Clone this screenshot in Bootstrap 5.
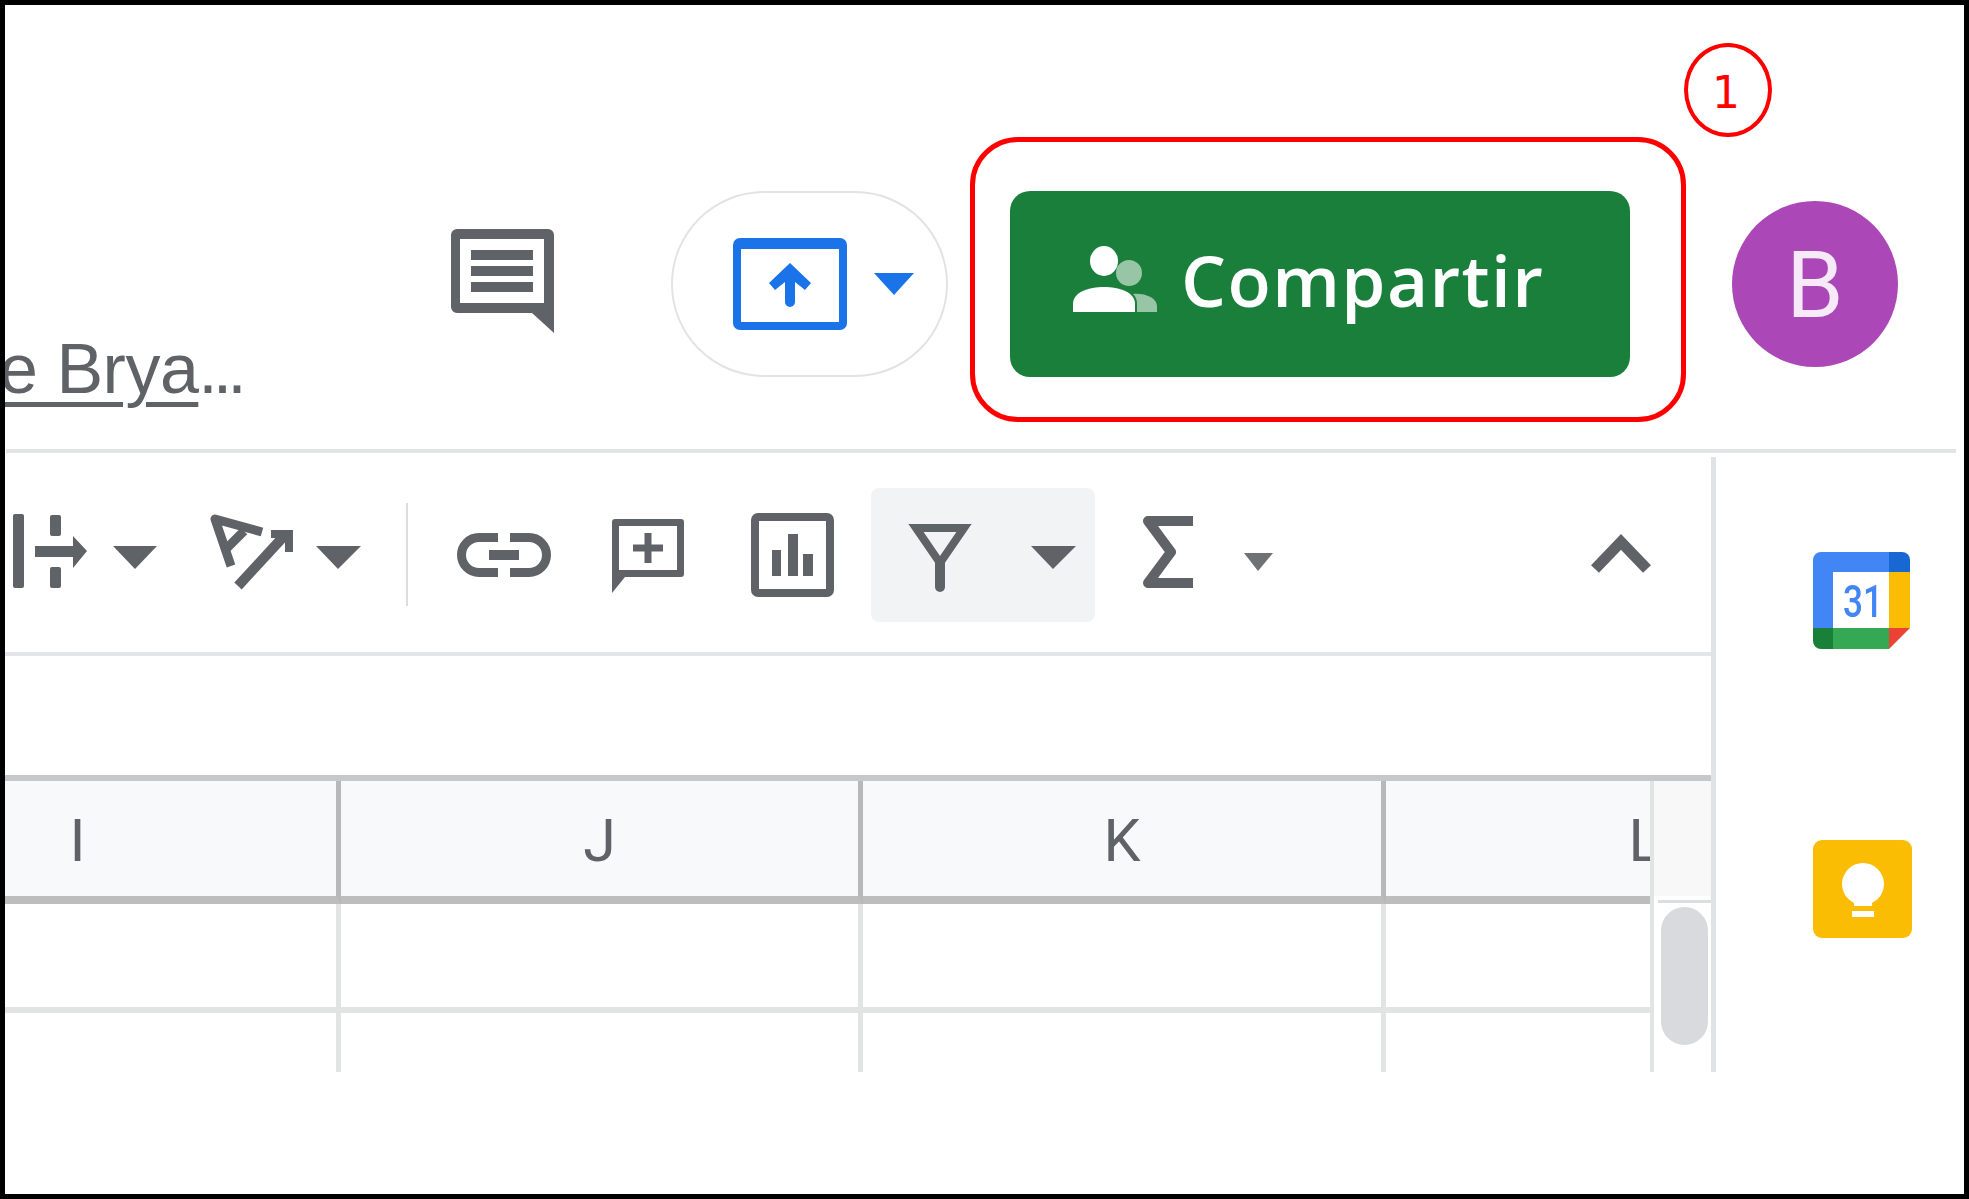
<!DOCTYPE html>
<html lang="es">
<head>
  <meta charset="UTF-8">
  <title>Compartir</title>
  <link href="https://cdn.jsdelivr.net/npm/bootstrap@5.3.3/dist/css/bootstrap.min.css" rel="stylesheet">
  <style>
    html, body { height: 100%; margin: 0; background: #000; }
    svg { display: block; flex-shrink: 0; }

    .shot { width: 1969px; height: 1199px; border: 5px solid #000; background: #fff; overflow: hidden; }
    .soft { filter: blur(.7px); }

    /* top bar */
    .top-bar { height: 444px; padding-top: 132px; }
    .doc-name { width: 446px; height: 90px; margin-top: 197px; overflow: hidden; white-space: nowrap;
      font: 400 70px/70px "Liberation Sans", Arial, sans-serif; color: #5f6368; }
    .doc-name u { margin-left: -6px; letter-spacing: -.5px; text-decoration-thickness: 5px; text-underline-offset: 9px; }
    .doc-dots { letter-spacing: -5px; }
    .top-comment { margin-top: 92px; }
    .btn.present-pill { width: 277px; height: 186px; margin: 54px 0 0 117px; padding: 0 0 0 60px; gap: 27px;
      border: 2px solid #e3e3e3; border-radius: 93px; background: #fff; }
    .red-box { position: relative; width: 716px; height: 285px; margin-left: 22px; padding: 49px 0 0 35px;
      border: 5px solid #f00; border-radius: 48px; }
    .red-num { position: absolute; left: 709px; top: -99px; width: 88px; height: 94px; padding: 4px 4px 0 0;
      border: 4px solid #f00; border-radius: 50%; color: #f00;
      font: 400 44px/84px "DejaVu Sans", sans-serif; text-align: center; }
    .btn.share-btn { width: 620px; height: 186px; padding: 0 0 10px 63px; gap: 24px; border: 0; border-radius: 20px;
      background: #1a7f3b; color: #fff; font: 600 71px/1 "Open Sans", sans-serif; letter-spacing: 1.4px; }
    .user-dot { width: 166px; height: 166px; margin: 64px 0 0 46px; padding-top: 4px; background: #ab47b7; color: #f6e9f8;
      font: 400 92px/1 Roboto, sans-serif; }
    .top-rule { height: 4px; margin: 0 8px 4px 1px; background: #e2e4e7; }

    /* main + rail */
    .work-area { height: 615px; }
    .main-col { width: 1711px; border-right: 5px solid #e0e2e6; }
    .tool-row { height: 195px; }
    .tool-sep { width: 2px; height: 103px; margin: 0 32px 0 36px; background: #dadce0; }
    .tool-active { width: 224px; height: 134px; background: #f1f3f4; border-radius: 8px; }
    .tool-chevron { margin-left: 290px; }
    .tool-rule { height: 4px; background: #e3e5e8; }
    .formula-row { height: 119px; }

    .sheet-top { height: 6px; background: #c6c8ca; }
    .sheet-wrap { height: 291px; }
    .sheet-view { width: 1645px; overflow: hidden; }
    .sheet-grid { display: grid; grid-template-columns: 522px 522px 523px 522px; grid-template-rows: 123px 109px 59px; margin-left: -186px; }
    .col-head { height: 123px; padding-top: 4px; background: #f8f9fa; border-right: 5px solid #b7b8b9; border-bottom: 8px solid #bdbdbd;
      font: 400 59px/1 Roboto, sans-serif; color: #5f6368; }
    .grid-cell { border-right: 5px solid #e2e3e3; }
    .grid-row-line { border-bottom: 6px solid #e2e3e3; }
    .side-gutter { width: 61px; border-left: 4px solid #e2e3e3; }
    .gutter-head { height: 115px; background: #f8f8f8; }
    .gutter-line { height: 3px; margin: 4px 0 0 4px; background: #dcdddf; }
    .gutter-thumb { width: 47px; height: 138px; margin: 4px 0 0 7px; background: #d8dadd; border-radius: 24px; }

    .side-rail { padding: 95px 0 0 97px; gap: 191px; }
  </style>
</head>
<body>
<div class="shot">

  <!-- top bar -->
  <div class="top-bar d-flex align-items-start">
    <div class="doc-name soft"><u>e Brya</u><span class="doc-dots">...</span></div>

    <svg class="top-comment soft" width="103" height="104" viewBox="0 0 103 104">
      <path fill="#5f6368" fill-rule="evenodd" d="M6 0H97a6 6 0 0 1 6 6V104L81 84H6a6 6 0 0 1-6-6V6a6 6 0 0 1 6-6ZM9 10V74H93V10Z"/>
      <path fill="#5f6368" d="M20 21H82V31H20ZM20 37H82V47H20ZM20 53H82V63H20Z"/>
    </svg>

    <button class="btn present-pill d-flex align-items-center soft" type="button">
      <svg width="114" height="96" viewBox="0 0 114 96">
        <path fill="#1a73e8" fill-rule="evenodd" d="M7 2H107a7 7 0 0 1 7 7V87a7 7 0 0 1-7 7H7a7 7 0 0 1-7-7V9a7 7 0 0 1 7-7ZM8 13V86H106V13Z"/>
        <path fill="#1a73e8" d="M57 27L78 47L72 54L62 46V66a5 5 0 0 1-10 0V46L42 54L36 47Z"/>
      </svg>
      <svg width="40" height="22" viewBox="0 0 40 22"><path fill="#1a73e8" d="M0 0H40L20 22Z"/></svg>
    </button>

    <div class="red-box">
      <button class="btn share-btn d-flex align-items-center soft" type="button">
        <svg width="84" height="66" viewBox="0 0 84 66">
          <circle cx="56" cy="27" r="13" fill="#fff" opacity=".55"/>
          <path fill="#fff" opacity=".55" d="M64 66V58C64 54 63 51 60 48C72 47 84 52 84 60V66Z"/>
          <ellipse cx="31" cy="15" rx="14" ry="15" fill="#fff"/>
          <path fill="#fff" d="M0 66V58C0 46 16 41 31 41C46 41 62 46 62 58V66Z"/>
        </svg>
        <span>Compartir</span>
      </button>
      <div class="red-num">1</div>
    </div>

    <div class="user-dot rounded-circle d-flex align-items-center justify-content-center soft">B</div>
  </div>
  <div class="top-rule soft"></div>

  <div class="work-area d-flex">
    <div class="main-col soft">

      <!-- toolbar -->
      <div class="tool-row d-flex align-items-center">
        <svg width="100" height="100" viewBox="0 0 100 100" fill="#5f6368">
          <rect x="8" y="9" width="11" height="74" rx="2"/>
          <rect x="45" y="10" width="11" height="21" rx="2"/>
          <rect x="45" y="62" width="11" height="21" rx="2"/>
          <path d="M30 41H68V31L82 46L68 63V52H30Z"/>
        </svg>
        <svg width="60" height="100" viewBox="0 0 60 100"><path fill="#5f6368" d="M8 41H52L30 64Z"/></svg>
        <svg width="135" height="100" viewBox="0 0 135 100" fill="none" stroke="#5f6368" stroke-width="9">
          <path d="M97 27L50 14L66 61" stroke-linejoin="round"/>
          <path d="M79 26L59 46"/>
          <path d="M73 81L120 30" stroke-width="10"/>
          <path d="M106 29H124V47" stroke-width="8"/>
        </svg>
        <svg width="70" height="100" viewBox="0 0 70 100"><path fill="#5f6368" d="M16 41H61L38 64Z"/></svg>
        <div class="tool-sep"></div>
        <svg width="165" height="100" viewBox="0 0 165 100" fill="none" stroke="#5f6368" stroke-width="9">
          <path d="M58 32.5H39a17.500 17.500 0 0 0 0 35H58"/>
          <path d="M70 32.5H89a17.500 17.500 0 0 1 0 35H70"/>
          <rect x="49" y="45" width="30" height="10" fill="#5f6368" stroke="none"/>
        </svg>
        <svg width="135" height="100" viewBox="0 0 135 100" fill="#5f6368">
          <path fill-rule="evenodd" d="M10 14H76a3 3 0 0 1 3 3V69a3 3 0 0 1-3 3H20L7 88V17a3 3 0 0 1 3-3ZM14 21V65H72V21Z"/>
          <path d="M39.500 28H46.500V39.500H58V46.500H46.500V58H39.500V46.500H28V39.500H39.500Z"/>
        </svg>
        <svg width="131" height="100" viewBox="0 0 131 100" fill="#5f6368">
          <rect x="15" y="12" width="75" height="76" rx="3" fill="none" stroke="#5f6368" stroke-width="8"/>
          <rect x="32" y="45" width="9" height="26"/>
          <rect x="48" y="29" width="10" height="42"/>
          <rect x="63" y="49" width="10" height="22"/>
        </svg>
        <div class="tool-active d-flex align-items-center">
          <svg width="130" height="100" viewBox="0 0 130 100" fill="none" stroke="#5f6368" stroke-width="8">
            <path d="M45 23H93L69 58Z"/>
            <path d="M69 58V82" stroke-width="10" stroke-linecap="round"/>
          </svg>
          <svg width="94" height="100" viewBox="0 0 94 100"><path fill="#5f6368" d="M30 41H75L52 64Z"/></svg>
        </div>
        <svg width="120" height="100" viewBox="0 0 120 100" fill="none" stroke="#5f6368" stroke-width="10">
          <path d="M98 16H53L76 47L53 78H98" stroke-linejoin="round"/>
        </svg>
        <svg width="75" height="100" viewBox="0 0 75 100"><path fill="#6f7175" d="M29 48H58L43 66Z"/></svg>
        <svg class="tool-chevron" width="80" height="100" viewBox="0 0 80 100" fill="none" stroke="#5f6368" stroke-width="11">
          <path d="M15 64L41 37L67 64"/>
        </svg>
      </div>
      <div class="tool-rule"></div>
      <div class="formula-row"></div>

      <!-- sheet -->
      <div class="sheet-top"></div>
      <div class="sheet-wrap d-flex">
        <div class="sheet-view">
          <div class="sheet-grid">
            <div class="col-head d-flex align-items-center justify-content-center">I</div>
            <div class="col-head d-flex align-items-center justify-content-center">J</div>
            <div class="col-head d-flex align-items-center justify-content-center">K</div>
            <div class="col-head d-flex align-items-center justify-content-center">L</div>
            <div class="grid-cell grid-row-line"></div>
            <div class="grid-cell grid-row-line"></div>
            <div class="grid-cell grid-row-line"></div>
            <div class="grid-cell grid-row-line"></div>
            <div class="grid-cell"></div>
            <div class="grid-cell"></div>
            <div class="grid-cell"></div>
            <div class="grid-cell"></div>
          </div>
        </div>
        <div class="side-gutter">
          <div class="gutter-head"></div>
          <div class="gutter-line"></div>
          <div class="gutter-thumb"></div>
        </div>
      </div>
    </div>

    <!-- side apps -->
    <div class="side-rail d-flex flex-column align-items-start soft">
      <svg width="97" height="97" viewBox="0 0 97 97">
        <path fill="#4285f4" d="M8 0H76V20H20V76H0V8a8 8 0 0 1 8-8Z"/>
        <path fill="#1967d2" d="M76 0H89a8 8 0 0 1 8 8V20H76Z"/>
        <rect x="76" y="20" width="21" height="56" fill="#fbbc04"/>
        <rect x="20" y="76" width="56" height="21" fill="#34a853"/>
        <path fill="#188038" d="M0 76H20V97H8a8 8 0 0 1-8-8Z"/>
        <path fill="#ea4335" d="M76 76H97L76 97Z"/>
        <text x="30" y="65" font-family="Roboto, sans-serif" font-size="44" font-weight="500" fill="#4285f4" textLength="40" lengthAdjust="spacingAndGlyphs">31</text>
      </svg>
      <svg width="99" height="98" viewBox="0 0 99 98">
        <rect width="99" height="98" rx="9" fill="#fbbc04"/>
        <circle cx="50" cy="44" r="21" fill="#fff"/>
        <rect x="41" y="56" width="18" height="10" fill="#fff"/>
        <rect x="39" y="71" width="22" height="6" fill="#fff"/>
      </svg>
    </div>
  </div>
</div>
<script src="https://cdn.jsdelivr.net/npm/bootstrap@5.3.3/dist/js/bootstrap.bundle.min.js"></script>
</body>
</html>
